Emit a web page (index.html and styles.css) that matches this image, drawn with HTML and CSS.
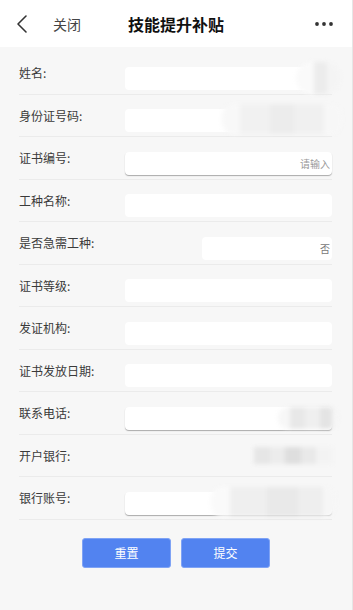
FILE: index.html
```html
<!DOCTYPE html>
<html lang="zh">

<head>
    <meta charset="UTF-8" />
    <meta name="viewport" content="width=device-width, initial-scale=1.0" />
    <title>技能提升补贴</title>
    <link rel="stylesheet" href="styles.css">
</head>

<body>
    <header class="topbar">
        <svg class="back" width="14" height="20" viewBox="0 0 14 20">
            <path d="M11 2 L3 10 L11 18" fill="none" stroke="#333" stroke-width="1.6" stroke-linecap="round" stroke-linejoin="round" />
        </svg>
        <span class="close">关闭</span>
        <h1>技能提升补贴</h1>
        <svg class="more" width="20" height="6" viewBox="0 0 20 6">
            <circle cx="3" cy="3" r="1.9" fill="#333" />
            <circle cx="10" cy="3" r="1.9" fill="#333" />
            <circle cx="17" cy="3" r="1.9" fill="#333" />
        </svg>
    </header>

    <form class="form">
        <div class="row">
            <label>姓名:</label>
            <div class="field"><input type="text" /><span class="mosaic m-name"></span></div>
        </div>
        <div class="row">
            <label>身份证号码:</label>
            <div class="field"><input type="text" /><span class="mosaic m-id"></span></div>
        </div>
        <div class="row">
            <label>证书编号:</label>
            <div class="field"><input type="text" class="shadow" placeholder="请输入" /></div>
        </div>
        <div class="row">
            <label>工种名称:</label>
            <div class="field"><input type="text" /></div>
        </div>
        <div class="row">
            <label>是否急需工种:</label>
            <div class="field right"><input type="text" class="short" value="否" /></div>
        </div>
        <div class="row">
            <label>证书等级:</label>
            <div class="field"><input type="text" /></div>
        </div>
        <div class="row">
            <label>发证机构:</label>
            <div class="field"><input type="text" /></div>
        </div>
        <div class="row">
            <label>证书发放日期:</label>
            <div class="field"><input type="text" /></div>
        </div>
        <div class="row">
            <label>联系电话:</label>
            <div class="field"><input type="text" class="shadow" /><span class="mosaic m-phone"></span></div>
        </div>
        <div class="row">
            <label>开户银行:</label>
            <div class="field"><span class="mosaic m-bank"></span></div>
        </div>
        <div class="row">
            <label>银行账号:</label>
            <div class="field"><input type="text" class="shadow" /><span class="mosaic m-account"></span></div>
        </div>

        <div class="actions">
            <button type="reset">重置</button>
            <button type="submit">提交</button>
        </div>
    </form>
</body>

</html>
```

FILE: styles.css
```css
body {
    margin: 0;
    background: #f7f7f7;
    font-family: "Noto Sans CJK SC", "Noto Sans", sans-serif;
    color: #333;
    height: 610px;
    border-right: 1px solid #e6e6e6;
    box-sizing: border-box;
}

.topbar {
    height: 47px;
    background: #fff;
    display: flex;
    align-items: center;
    position: relative;
    padding: 0 18px 0 15px;
}

.topbar .back {
    display: block;
}

.topbar .close {
    margin-left: 24px;
    font-size: 14px;
    color: #444;
}

.topbar h1 {
    position: absolute;
    left: 0;
    right: 0;
    margin: 0;
    text-align: center;
    font-size: 16px;
    font-weight: bold;
    color: #111;
    pointer-events: none;
}

.topbar .more {
    margin-left: auto;
}

.form {
    padding: 5px 20px 0 19px;
}

.row {
    display: flex;
    height: 42.5px;
    box-sizing: border-box;
    border-bottom: 1px solid #ebebeb;
}

.row label {
    align-self: center;
    width: 106px;
    flex: none;
    font-size: 12px;
    color: #3a3a3a;
    margin-top: 0;
}

.field {
    flex: 1;
    align-self: flex-end;
    margin-bottom: 4px;
    position: relative;
    display: flex;
    height: 23px;
}

.field.right {
    justify-content: flex-end;
}

.field input {
    flex: 1;
    min-width: 0;
    height: 23px;
    box-sizing: border-box;
    border: none;
    border-radius: 4px;
    background: #fff;
    padding: 0 2px;
    font-family: inherit;
    font-size: 10px;
    color: #777;
    text-align: right;
    outline: none;
}

.field input.short {
    flex: none;
    width: 130px;
}

.field input.shadow {
    box-shadow: 0 1px 1px #aaa;
}

.field input::placeholder {
    color: #999;
}

.mosaic {
    position: absolute;
    top: -5px;
    filter: blur(2px);
}

.m-name {
    right: -8px;
    width: 44px;
    height: 32px;
    border-radius: 16px;
    background: linear-gradient(90deg, #fafafa 0 40%, #ececec 40% 70%, #f4f4f4 70%);
}

.m-id {
    right: -10px;
    width: 120px;
    height: 30px;
    border-radius: 12px;
    background: linear-gradient(90deg, #f8f8f8 0 15%, #f1f1f1 15% 40%, #ececec 40% 60%, #f0f0f0 60% 85%, #f7f7f7 85%);
}

.m-phone {
    right: -6px;
    top: 0;
    width: 60px;
    height: 22px;
    border-radius: 10px;
    background: linear-gradient(90deg, #f7f7f7 0 20%, #e8e8e8 20% 45%, #efefef 45% 70%, #e4e4e4 70% 90%, #f5f5f5 90%);
}

.m-bank {
    right: 0;
    top: -2px;
    width: 78px;
    height: 17px;
    background: linear-gradient(90deg, #e6e6e6 0 20%, #ececec 20% 40%, #dedede 40% 60%, #e9e9e9 60% 80%, #f3f3f3 80%);
}

.m-account {
    right: -4px;
    top: -5px;
    width: 125px;
    height: 30px;
    border-radius: 12px;
    background: linear-gradient(90deg, #fafafa 0 15%, #efefef 15% 45%, #e9e9e9 45% 70%, #eeeeee 70% 90%, #f6f6f6 90%);
}

.actions {
    display: flex;
    justify-content: center;
    gap: 10px;
    margin-top: 18px;
    padding-left: 1px;
}

.actions button {
    width: 89px;
    height: 30px;
    border: 1px solid #7fa3f5;
    border-radius: 3px;
    background: #5283f0;
    color: #fff;
    font-family: inherit;
    font-size: 12px;
}
```
